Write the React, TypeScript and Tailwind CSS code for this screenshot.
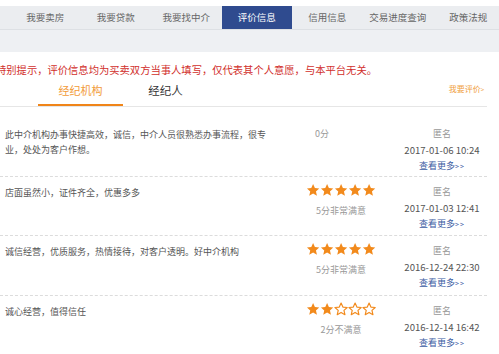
import type { ReactNode } from 'react';

const navItems = ['我要卖房', '我要贷款', '我要找中介', '评价信息', '信用信息', '交易进度查询', '政策法规'];

const reviews = [
  {
    lines: ['此中介机构办事快捷高效，诚信，中介人员很熟悉办事流程，很专', '业，处处为客户作想。'],
    stars: 0,
    score: '0分',
    date: '2017-01-06 10:24',
    height: 'h-[58px]',
  },
  {
    lines: ['店面虽然小，证件齐全，优惠多多'],
    stars: 5,
    score: '5分非常满意',
    date: '2017-01-03 12:41',
    height: 'h-[59px]',
  },
  {
    lines: ['诚信经营，优质服务，热情接待，对客户透明。好中介机构'],
    stars: 5,
    score: '5分非常满意',
    date: '2016-12-24 22:30',
    height: 'h-[60px]',
  },
  {
    lines: ['诚心经营，值得信任'],
    stars: 2,
    score: '2分不满意',
    date: '2016-12-14 16:42',
    height: 'h-[60px]',
  },
];

function Star({ filled }: { filled: boolean }) {
  return (
    <svg viewBox="0 0 24 24" aria-hidden="true" className="h-[14px] w-[14.2px]">
      <path
        d="M12 1.8l3.1 6.9 7.4.7-5.6 5 1.7 7.4L12 17.9l-6.6 3.9 1.7-7.4-5.6-5 7.4-.7z"
        fill={filled ? '#f28a1c' : 'none'}
        stroke="#f28a1c"
        strokeWidth={filled ? 0 : 2}
        strokeLinejoin="round"
      />
    </svg>
  );
}

function ReviewRow({ review, last }: { review: (typeof reviews)[number]; last: boolean }): ReactNode {
  return (
    <div className={`flex ${review.height} ${last ? '' : 'border-b border-dashed border-[#dcdcdc]'}`}>
      <div className="w-[268px] shrink-0 pl-[5px] pt-[8px] text-[9px] leading-[15px] text-[#555]">
        {review.lines.map((line) => (
          <p key={line} className="whitespace-nowrap">
            {line}
          </p>
        ))}
      </div>
      <div className="ml-[28px] flex w-[90px] flex-col items-center pt-[6px]">
        {review.stars > 0 ? (
          <>
            <div className="flex">
              {[0, 1, 2, 3, 4].map((i) => (
                <Star key={i} filled={i < review.stars} />
              ))}
            </div>
            <span className="mt-[6px] text-[9px] leading-[16px] text-[#999]">{review.score}</span>
          </>
        ) : (
          <span className="self-start pl-[19px] pt-[1px] text-[9px] leading-[16px] text-[#999]">{review.score}</span>
        )}
      </div>
      <div className="ml-[16px] flex w-[80px] flex-col items-center pt-[7px] leading-[16px]">
        <span className="text-[9px] text-[#999]">匿名</span>
        <span className="text-[9.6px] text-[#555]">{review.date}</span>
        <span className="text-[9px] text-[#3b5ca3]">
          查看更多<span className="text-[7px] tracking-[1px]">&gt;&gt;</span>
        </span>
      </div>
    </div>
  );
}

export default function App() {
  return (
    <div
      className="h-[354px] w-[499px] overflow-hidden bg-white"
      style={{ fontFamily: '"Noto Sans CJK SC", "Noto Sans", sans-serif' }}
    >
      <div className="h-[6px]" />
      <nav className="flex h-[24px] border-b border-[#dde0e4] bg-[#ebedf0] pl-[10px]">
        {navItems.map((item) => (
          <span
            key={item}
            className={[
              'flex w-[70.5px] shrink-0 items-center justify-center text-[9.5px]',
              item === '评价信息' ? 'bg-[#2f4b8f] text-white' : 'text-[#666]',
            ].join(' ')}
          >
            {item}
          </span>
        ))}
      </nav>
      <div className="h-[22px] bg-[#eef0f3]" />

      <p className="ml-[-4px] whitespace-nowrap pt-[11px] text-[10.3px] leading-[14px] text-[#d12f2c]">
        特别提示，评价信息均为买卖双方当事人填写，仅代表其个人意愿，与本平台无关。
      </p>

      <div className="mr-[12px] mt-[1px] flex h-[29px] items-start border-b border-[#e6e6e6] pl-[38px]">
        <span className="flex h-[28px] w-[85px] justify-center border-b-2 border-[#f08519] pt-[5px] text-[11px] leading-[14px] text-[#f29b38]">
          经纪机构
        </span>
        <span className="flex h-[28px] w-[85px] justify-center pt-[5px] text-[11.5px] leading-[14px] text-[#333]">
          经纪人
        </span>
        <span className="ml-auto mr-[3px] pt-[5px] text-[8px] leading-[12px] text-[#f0a040]">
          我要评价<span className="text-[6px]">&gt;</span>
        </span>
      </div>

      <div className="mr-[12px] mt-[12px]">
        {reviews.map((review, i) => (
          <ReviewRow key={review.date} review={review} last={i === reviews.length - 1} />
        ))}
      </div>
    </div>
  );
}
